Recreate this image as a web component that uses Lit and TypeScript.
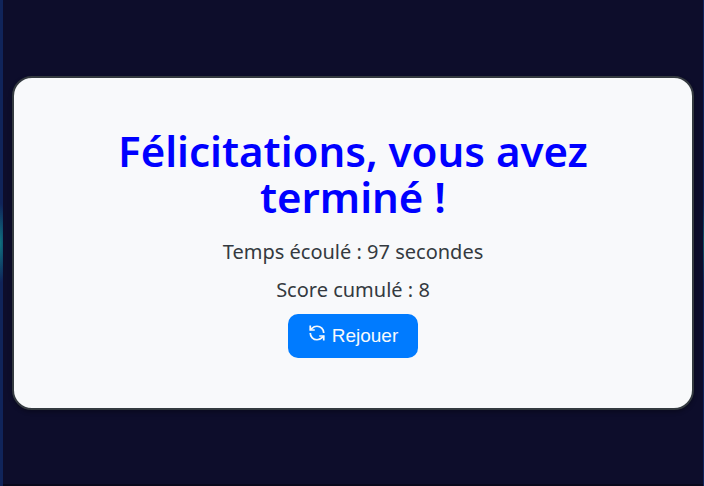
import { LitElement, html, css } from "lit";
import { customElement, property } from "lit/decorators.js";

@customElement("app-root")
export class AppRoot extends LitElement {
  @property({ type: Number }) seconds = 97;
  @property({ type: Number }) score = 8;

  static styles = css`
    :host {
      display: block;
    }
    .backdrop {
      box-sizing: border-box;
      display: flex;
      min-height: 100vh;
      padding: 0 1px 0 3px;
      background: radial-gradient(ellipse 8px 40px at 0 50%, #0f7480, transparent),
        radial-gradient(ellipse 4px 40px at 100% 50%, #0b5165, transparent), #10245a;
    }
    .page {
      box-sizing: border-box;
      flex: 1;
      display: flex;
      align-items: center;
      padding: 2px 9px 0;
      background: #0d0d2b;
      border-bottom: 2px solid #08081c;
    }
    .card {
      box-sizing: border-box;
      flex: 1;
      padding: 50px 60px;
      border: 2px solid #343a40;
      border-radius: 20px;
      background: #f8f9fb;
      box-shadow: 0 2px 4px rgba(0, 0, 0, 0.3);
      color: #343a40;
      text-align: center;
      font-family: "Noto Sans", "Open Sans", sans-serif;
    }
    .title {
      margin: 0 0 18px;
      color: #0000ff;
      font-size: 42px;
      font-weight: 600;
      line-height: 46px;
    }
    .line {
      margin: 0 0 10px;
      font-size: 20px;
      line-height: 28px;
    }
    .replay {
      display: inline-flex;
      align-items: center;
      gap: 6px;
      height: 44px;
      padding: 0 20px;
      border: 0;
      border-radius: 10px;
      background: #007bff;
      color: #f8f9fb;
      font: 19px "Liberation Sans", Arial, sans-serif;
      cursor: pointer;
    }
    .icon {
      width: 18px;
      height: 18px;
      margin-bottom: 6px;
      fill: none;
      stroke: currentColor;
      stroke-width: 2.3;
    }
  `;

  render() {
    return html`
      <div class="backdrop">
        <main class="page">
          <section class="card">
            <h1 class="title">Félicitations, vous avez terminé !</h1>
            <p class="line">Temps écoulé : ${this.seconds} secondes</p>
            <p class="line">Score cumulé : ${this.score}</p>
            <button class="replay" type="button">
              <svg class="icon" viewBox="0 0 24 24" aria-hidden="true">
                <path d="M21 12a9 9 0 0 0-9-9 9.75 9.75 0 0 0-6.74 2.74L3 8" />
                <path d="M3 2v6h6" />
                <path d="M3 12a9 9 0 0 0 9 9 9.75 9.75 0 0 0 6.74-2.74L21 16" />
                <path d="M15 16h6v6" />
              </svg>
              <span>Rejouer</span>
            </button>
          </section>
        </main>
      </div>
    `;
  }
}
